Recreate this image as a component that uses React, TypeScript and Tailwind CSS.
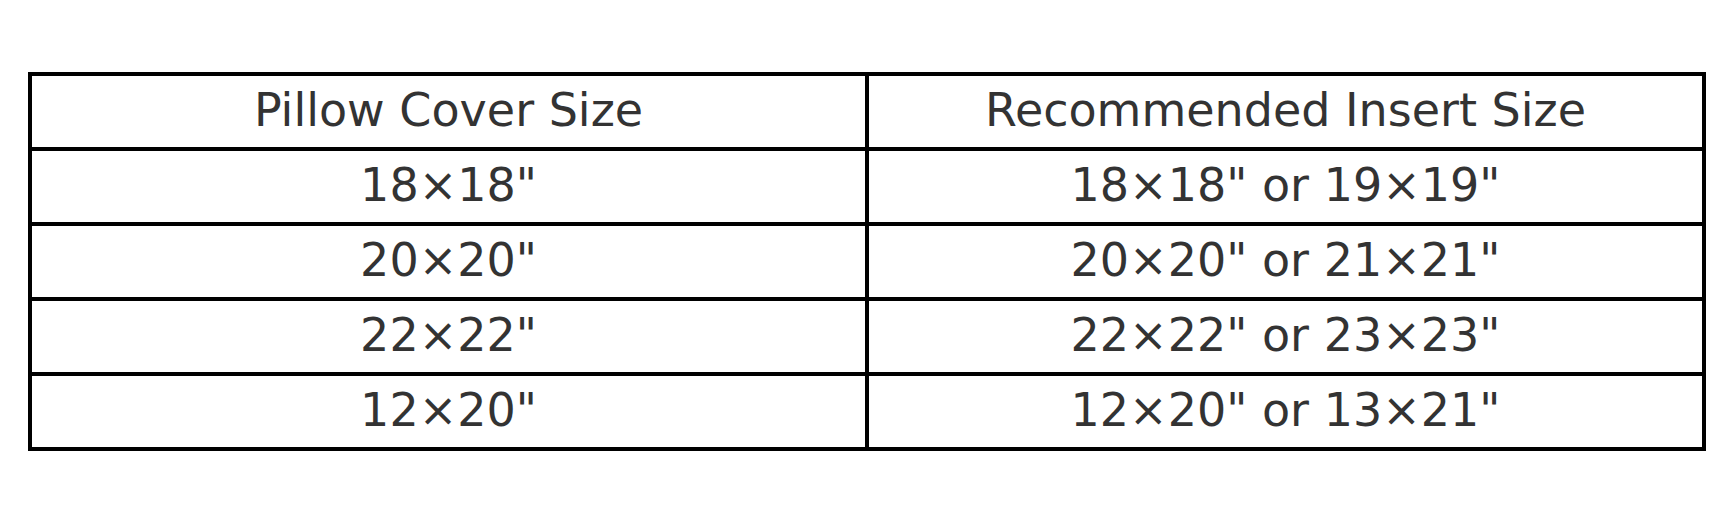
import React from "react";

const rows: [string, string][] = [
  ['18×18"', '18×18" or 19×19"'],
  ['20×20"', '20×20" or 21×21"'],
  ['22×22"', '22×22" or 23×23"'],
  ['12×20"', '12×20" or 13×21"'],
];

export default function App() {
  return (
    <div className="h-[522px] w-[1733px] bg-white pl-[28px] pt-[72px] font-['DejaVu_Sans',sans-serif] text-[#333333]">
      <table className="w-[1678px] table-fixed border-collapse border-[4.5px] border-black text-[46px] leading-[56px]">
        <thead>
          <tr>
            <th className="h-[75px] border-[4.5px] border-black p-0 pb-[4px] text-center font-normal">Pillow Cover Size</th>
            <th className="h-[75px] border-[4.5px] border-black p-0 pb-[4px] text-center font-normal">Recommended Insert Size</th>
          </tr>
        </thead>
        <tbody>
          {rows.map(([cover, insert]) => (
            <tr key={cover}>
              <td className="h-[75px] border-[4.5px] border-black p-0 pb-[4px] text-center">{cover}</td>
              <td className="h-[75px] border-[4.5px] border-black p-0 pb-[4px] text-center">{insert}</td>
            </tr>
          ))}
        </tbody>
      </table>
    </div>
  );
}
